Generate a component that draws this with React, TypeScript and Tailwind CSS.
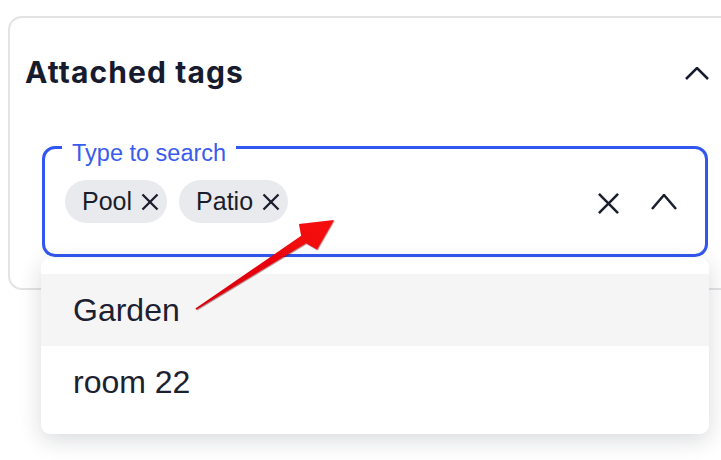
import React from 'react'

const tags = ['Pool', 'Patio']
const options = ['Garden', 'room 22']

function Cross({ size, stroke = 2 }: { size: number; stroke?: number }) {
  return (
    <svg width={size} height={size} viewBox="0 0 24 24" fill="none" stroke="currentColor" strokeWidth={stroke} strokeLinecap="butt">
      <path d="M2 2 22 22" />
      <path d="M22 2 2 22" />
    </svg>
  )
}

function ChevronUp({ w, h, stroke = 2.5 }: { w: number; h: number; stroke?: number }) {
  return (
    <svg width={w} height={h} viewBox={`0 0 ${w} ${h}`} fill="none" stroke="currentColor" strokeWidth={stroke} strokeLinejoin="miter">
      <path d={`M1 ${h - 1} ${w / 2} 1 ${w - 1} ${h - 1}`} />
    </svg>
  )
}

function Chip({ label }: { label: string }) {
  return (
    <span className="flex items-center gap-[9px] h-[43px] rounded-full bg-[#e9eaee] pl-[17px] pr-[8px] text-[25px] text-[#1a1d2b]">
      {label}
      <Cross size={18} stroke={3} />
    </span>
  )
}

// annotation arrow drawn over the form
function Pointer() {
  return (
    <svg className="absolute left-0 top-0 pointer-events-none" width={721} height={460}>
      <defs>
        <linearGradient id="arrowFill" x1="0" y1="1" x2="1" y2="0">
          <stop offset="0" stopColor="#d8000c" />
          <stop offset="1" stopColor="#f80a10" />
        </linearGradient>
        <filter id="arrowShade" x="-10%" y="-10%" width="120%" height="120%">
          <feDropShadow dx="0.6" dy="0.9" stdDeviation="0.6" floodColor="#500" floodOpacity="0.5" />
        </filter>
      </defs>
      <polygon
        points="195.4,308.6 301.2,235.8 299,224 334,220 317,249.5 306,243.2 196.6,309.6"
        fill="url(#arrowFill)"
        filter="url(#arrowShade)"
      />
    </svg>
  )
}

export default function App() {
  return (
    <div className="relative w-[721px] h-[460px] overflow-hidden bg-white" style={{ fontFamily: '"Liberation Sans", Arial, sans-serif' }}>
      <div className="ml-2 mt-4 w-[740px] rounded-[14px] border-2 border-[#e3e3e5] pb-[31px]">
        <div className="flex h-[108px] items-center justify-between pl-[15px] pr-[37px]">
          <h2 className="text-[30px] font-bold text-[#161b2e] tracking-[1.1px]" style={{ fontFamily: 'Inter, "Liberation Sans", sans-serif' }}>
            Attached tags
          </h2>
          <span className="text-[#161b2e] mt-[2px]">
            <ChevronUp w={24} h={13} />
          </span>
        </div>

        <div className="relative ml-[32px] mt-[20px] w-[666px]">
          <div className="relative flex h-[111px] items-center rounded-[13px] border-[3px] border-[#3257f0] pl-[20px] pr-[28px]">
            <span className="absolute left-[17px] top-[-8px] bg-white px-[10px] text-[23.5px] leading-[24px] text-[#3a5cec]">
              Type to search
            </span>
            <div className="flex flex-1 items-center gap-[12px]">
              {tags.map(t => <Chip key={t} label={t} />)}
            </div>
            <div className="flex items-center gap-[31px] text-[#1a1f2e]">
              <span className="mt-[3px]"><Cross size={23} stroke={2.6} /></span>
              <ChevronUp w={26} h={16} />
            </div>
          </div>

          {/* options popover */}
          <ul className="absolute left-[-1px] top-[112px] w-[668px] rounded-[9px] bg-white py-[16px] shadow-[0_6px_22px_rgba(20,25,45,0.16)]">
            {options.map((o, i) => (
              <li key={o} className={`flex h-[72px] items-center pl-[32px] text-[32px] text-[#1c2131] ${i === 0 ? 'bg-[#f5f5f6]' : ''}`}>
                {o}
              </li>
            ))}
          </ul>
        </div>
      </div>
      <Pointer />
    </div>
  )
}
